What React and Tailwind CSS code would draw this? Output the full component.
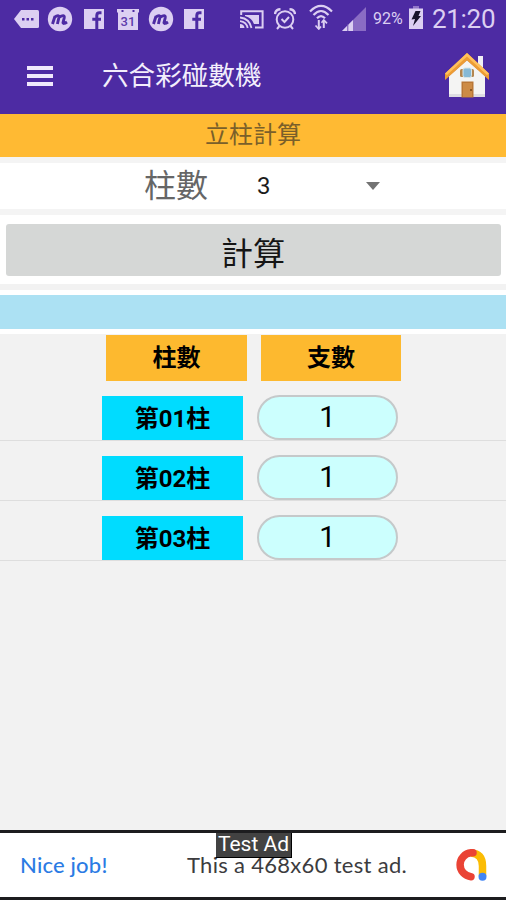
import { useState } from 'react'

const rows = [
  { id: '01', count: 1 },
  { id: '02', count: 1 },
  { id: '03', count: 1 },
]

function MessengerIcon({ className }) {
  return (
    <svg viewBox="0 0 26 26" className={`h-[26px] w-[26px] shrink-0 ${className}`}>
      <circle cx="13" cy="13" r="12.2" fill="#dccff2" />
      <path d="M5.5 18 L8 10.2 M7.2 11.5 Q12.5 7.5 11.8 12 L10.4 18 M11.7 11.5 Q18 7.5 17.2 12 L16 16.5 Q16.2 18.6 20 16" fill="none" stroke="#4d2ba3" strokeWidth="2.9" />
    </svg>
  )
}

function FacebookIcon({ className }) {
  return (
    <svg viewBox="0 0 20 20" className={`h-5 w-5 shrink-0 ${className}`}>
      <rect width="20" height="20" fill="#dccff2" />
      <path d="M17.5 3.7 H15.5 Q12.8 3.7 12.8 6.5 V20 M8.3 10.2 H17" fill="none" stroke="#4d2ba3" strokeWidth="3" />
    </svg>
  )
}

function StatusBar() {
  return (
    <div className="flex h-[38px] items-center text-[#dccff2]">
      {/* notifications */}
      <svg viewBox="0 0 25 18" className="ml-3.5 h-[18px] w-[25px] shrink-0">
        <path d="M7 0 H23.5 Q25 0 25 1.5 V16.5 Q25 18 23.5 18 H7 L0 9 Z" fill="currentColor" />
        <path d="M8 8 h2.5 v2.5 h-2.5z M12.5 8 h2.5 v2.5 h-2.5z M17 8 h2.5 v2.5 h-2.5z" fill="#4d2ba3" />
      </svg>
      <MessengerIcon className="ml-2" />
      <FacebookIcon className="ml-[11px]" />
      <svg viewBox="0 0 22 22" className="ml-[13px] h-[22px] w-[22px] shrink-0">
        <path d="M0 1 H22 V4 L21 5 V22 H1 V5 L0 4 Z" fill="currentColor" />
        <path d="M5.5 2 v2 M16.5 2 v2" stroke="#4d2ba3" strokeWidth="2" />
        <text x="11" y="18" textAnchor="middle" fontSize="13" fontWeight="500" fontFamily="Roboto, sans-serif" fill="#5d3aac">31</text>
      </svg>
      <MessengerIcon className="ml-[9px]" />
      <FacebookIcon className="ml-[10px]" />

      {/* system icons */}
      <svg viewBox="0 0 24 19" className="ml-[36px] h-[19px] w-6 shrink-0" fill="none" stroke="currentColor" strokeWidth="2">
        <path d="M1.2 5 V1.2 H22.6 V17.4 H15" />
        <path d="M5 5 H19 V14 H14 Q12 8 5 6 Z" fill="currentColor" stroke="none" />
        <path d="M0 7.5 Q9.5 8.5 11.5 18 M0 11.2 Q6.5 12 7.7 18" strokeWidth="1.8" />
        <path d="M0 14 Q4 14 4.5 18 H0 Z" fill="currentColor" stroke="none" />
      </svg>
      <svg viewBox="0 0 22 22" className="ml-2.5 h-[22px] w-[22px] shrink-0" fill="none" stroke="currentColor" strokeWidth="2">
        <circle cx="11" cy="11.5" r="8.3" />
        <path d="M7.5 11 L10.5 14 L15 9" />
        <path d="M1 6 Q1.5 1.5 6.5 1.3 M15.5 1.3 Q20.5 1.5 21 6" strokeWidth="2.4" />
        <path d="M5.5 18 L3 21 M16.5 18 L19 21" />
      </svg>
      <svg viewBox="0 0 24 26" className="ml-[13px] -mt-1 h-[26px] w-6 shrink-0" fill="none" stroke="currentColor" strokeWidth="2.2">
        <path d="M1 7.5 Q12 -3.8 23 7.5 M4.5 11 Q12 3 19.5 11 M8 14.3 Q12 10 16 14.3" />
        <path d="M9.8 16 V25 M14.8 16 V24" strokeWidth="2" />
        <path d="M6.5 21.5 L9.8 25 L12 22.5 M12.5 18.7 L14.8 16 L18 19.3" strokeWidth="1.7" />
      </svg>
      <svg viewBox="0 0 24 24" className="ml-[9px] h-6 w-6 shrink-0">
        <path d="M24 0 V24 H0 Z" fill="#8a6cc4" />
        <path d="M11 13 V24 H0 Z" fill="currentColor" />
        <path d="M5.8 17 V24" stroke="#6b4ab3" strokeWidth="1" />
      </svg>
      <span className="ml-[7px] w-[31px] text-[16px] whitespace-nowrap">92%</span>
      <svg viewBox="0 0 14 23" className="ml-[5px] -mt-1 h-[23px] w-3.5 shrink-0">
        <path d="M4 0 H10 V2.5 H14 V23 H0 V2.5 H4 Z" fill="currentColor" />
        <path d="M4 0 H10 V2.5 H4 Z" fill="#9275c9" />
        <path d="M6.5 5 L11.5 5 L9.5 10 L12 10 L4 20 L6 13 L2.5 13.5 Z" fill="#16102a" />
      </svg>
      <span className="ml-[9px] text-[26px] leading-none whitespace-nowrap tracking-[-0.3px]">21:20</span>
    </div>
  )
}

function HomeIcon() {
  return (
    <svg viewBox="0 0 46 46" className="h-[46px] w-[46px]">
      <path d="M34 3 H39 V20 H34 Z" fill="#f1eff6" />
      <path d="M5 23 L23 7 L41 23 V44 H5 Z" fill="#f4f4f3" />
      <path d="M5 41 H41 V44 H5 Z" fill="#dedde2" />
      <path d="M23 0 L45 20.5 V27 L23 7.5 L1 27 V20.5 Z" fill="#ed9c34" />
      <path d="M23 0 L45 20.5 L43 22 L23 3.5 L3 22 L1 20.5 Z" fill="#ffc05c" />
      <rect x="16" y="16" width="14" height="8" rx="1.5" fill="#b4864f" />
      <rect x="19" y="15" width="8.5" height="9.5" rx="2" fill="#86b9d6" stroke="#d8e5e6" />
      <rect x="17.5" y="28.5" width="12" height="16" fill="#b97737" />
      <rect x="19" y="30" width="9" height="14" fill="#cd8b46" />
      <circle cx="27" cy="37" r="1" fill="#744619" />
    </svg>
  )
}

function AdBanner() {
  return (
    <div className="relative mt-auto flex h-[70px] items-center border-t-[3px] border-b-[3px] border-[#1d1d1f] bg-white pb-px pl-5 font-[Lato,sans-serif]">
      <span className="w-[167px] text-[22px] font-medium tracking-[0.2px] whitespace-nowrap text-[#2b7be4]">Nice job!</span>
      <span className="w-[267px] text-[22px] tracking-[0.3px] whitespace-nowrap text-[#3c3c3e]">This a 468x60 test ad.</span>
      <svg viewBox="0 0 34 34" className="h-[34px] w-[34px]" fill="none" strokeWidth="7.5">
        <path d="M17 5 Q28.5 5.5 28.5 18 V28" stroke="#fbbc04" />
        <path d="M19 4.8 H17 A12 12 0 0 0 17 28.7" stroke="#ea4335" strokeLinecap="round" />
        <circle cx="28.5" cy="28.8" r="4" fill="#4285f4" />
      </svg>
      <span className="absolute top-0 left-[216px] flex h-[25px] w-[76px] items-center justify-center border-r border-b border-black bg-[#424242] font-[Roboto,sans-serif] text-[21px] whitespace-nowrap text-white">
        Test Ad
      </span>
    </div>
  )
}

export default function App() {
  const [columns] = useState(3)

  return (
    <div className="flex h-[900px] w-[506px] flex-col overflow-hidden bg-[#f2f2f2] font-[Roboto,'Noto_Sans_CJK_TC',sans-serif] text-black">
      <header className="h-[114px] shrink-0 bg-[#4d2ba3]">
        <StatusBar />
        <div className="flex h-[76px] items-center">
          <div className="ml-[27px] flex w-[26px] flex-col gap-1">
            <span className="h-[4px] bg-[#f0e9fc]" />
            <span className="h-[4px] bg-[#f0e9fc]" />
            <span className="h-[4px] bg-[#f0e9fc]" />
          </div>
          <h1 className="ml-[49px] text-[26.6px] leading-none whitespace-nowrap text-[#f3eefc]">六合彩碰數機</h1>
          <div className="ml-auto pr-4">
            <HomeIcon />
          </div>
        </div>
      </header>

      <div className="flex h-[43px] shrink-0 items-center justify-center bg-[#ffba33] pb-px text-[24px] leading-none text-[#7a5f2a]">
        立柱計算
      </div>

      {/* column count */}
      <div className="flex h-[58px] shrink-0 items-center border-t-[6px] border-b-[6px] border-[#f4f4f4] bg-white">
        <span className="ml-36 w-[113px] text-[32px] leading-none text-[#666666]">柱數</span>
        <span className="w-[109px] text-[24px] leading-none text-[#1c1c1c]">{columns}</span>
        <svg viewBox="0 0 14 8" className="h-2 w-3.5">
          <path d="M0 0 H14 L7 8 Z" fill="#737373" />
        </svg>
      </div>

      <div className="h-[69px] shrink-0 bg-white px-[5.5px] pt-[9px]">
        <button className="flex h-[52px] w-full items-center justify-center rounded-[3px] bg-[#d5d7d6] pt-2 text-[32px] leading-none text-[#151515]">
          計算
        </button>
      </div>

      <div className="mt-[6px] h-[44px] shrink-0 border-t-[5px] border-b-[5px] border-white bg-[#ace1f3]" />

      {/* table header */}
      <div className="mt-[1px] flex h-[46px] shrink-0 gap-[14px] pl-[106px] text-[24px] leading-none font-bold">
        <div className="flex w-[141px] items-center justify-center bg-[#fdb92f]">柱數</div>
        <div className="flex w-[140px] items-center justify-center bg-[#fdb92f]">支數</div>
      </div>

      {rows.map((row) => (
        <div
          key={row.id}
          className="flex h-[60px] shrink-0 items-end gap-[14px] border-b border-[#dedede] pl-[102px] leading-none"
        >
          <div className="flex h-11 w-[141px] items-center justify-center bg-[#00dcff] pt-0.5 text-[24px] font-bold">
            第{row.id}柱
          </div>
          <div className="flex h-[45px] w-[141px] items-center justify-center rounded-full border-[2.5px] border-[#c5c9ca] bg-[#ccfffe] text-[29px]">
            {row.count}
          </div>
        </div>
      ))}

      <AdBanner />
    </div>
  )
}
